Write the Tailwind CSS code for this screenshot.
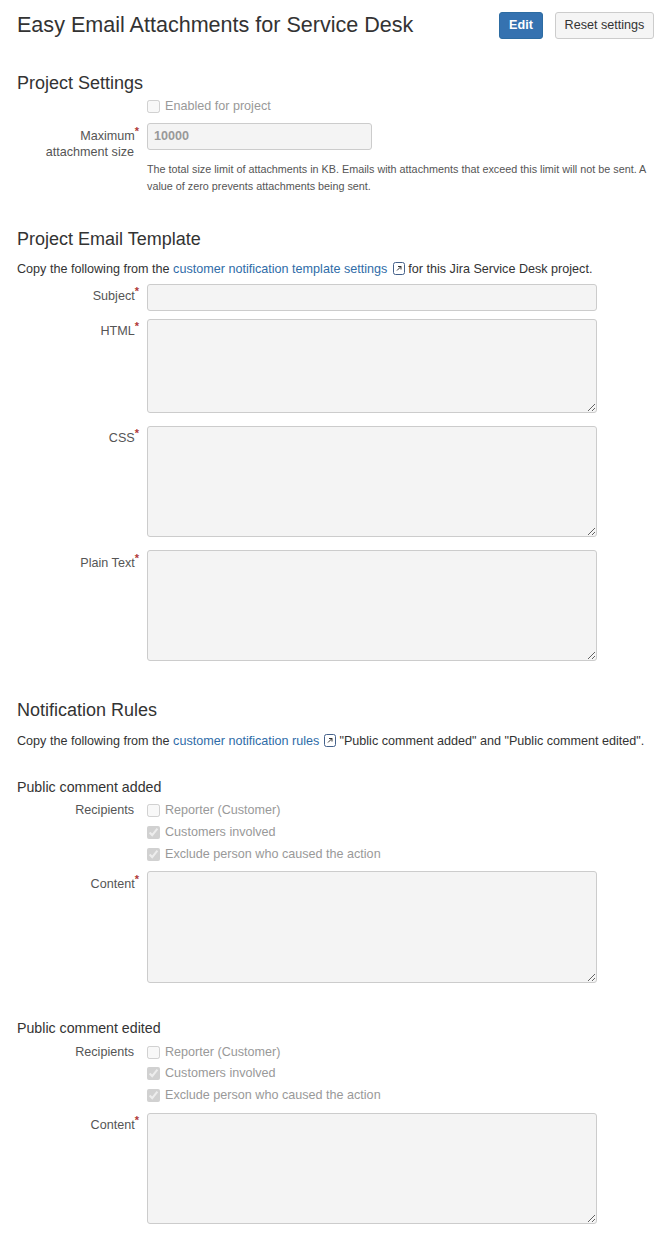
<!DOCTYPE html>
<html lang="en">

<head>
    <meta charset="UTF-8">
    <meta name="viewport" content="width=device-width, initial-scale=1.0">
    <script src="https://cdn.jsdelivr.net/npm/@tailwindcss/browser@4"></script>
    <title>Easy Email Attachments for Service Desk</title>
</head>

<body class="bg-white font-['Liberation_Sans',Arial,sans-serif] text-[12.6px] text-[#333]">
    <div class="pl-[17px] pr-[9px] pt-[12px] h-[1236px] overflow-hidden">
        <!--Header-->
        <div class="flex items-start h-[27px]">
            <h1 class="flex-1 text-[21.55px] leading-[26px] text-[#333]">Easy Email Attachments for Service Desk</h1>
            <button class="h-[27px] w-[44px] mr-[12px] rounded-[3px] bg-[#3572b0] border border-[#2d6ca2] text-white font-bold text-[12.6px]">Edit</button>
            <button class="h-[27px] w-[99px] rounded-[3px] bg-[#f5f5f5] border border-[#ccc] text-[#333] text-[12.6px]">Reset settings</button>
        </div>

        <!--Project Settings-->
        <h2 class="mt-[33px] text-[18px] leading-[22px]">Project Settings</h2>
        <div class="ml-[130px] mt-[2px] h-[20px] flex items-center">
            <input type="checkbox" disabled class="w-[13px] h-[13px] m-0 mr-[5px]">
            <span class="text-[#999]">Enabled for project</span>
        </div>
        <div class="flex mt-[7px]">
            <label class="w-[130px] pr-[13px] pt-[5px] text-right leading-[16px] text-[#555]">Maximum<span class="text-[#b03a38] font-bold text-[11px] align-super leading-[0] -mr-[5px]">*</span><br>attachment size</label>
            <input type="text" disabled value="10000" class="w-[225px] h-[27px] px-[6px] pb-[2px] rounded-[3px] border border-[#ccc] bg-[#f4f4f4] text-[#999] font-bold text-[12.6px]">
        </div>
        <p class="ml-[130px] mt-[1px] text-[10.8px] leading-[17px] text-[#555]">The total size limit of attachments in KB. Emails with attachments that exceed this limit will not be sent. A value of zero prevents attachments being sent.</p>

        <!--Project Email Template-->
        <h2 class="mt-[33px] text-[18px] leading-[22px]">Project Email Template</h2>
        <p class="mt-[9px] leading-[20px]">Copy the following from the <a class="text-[#2f6ca8]">customer notification template settings</a>
            <svg class="inline-block align-[-2px] ml-[2px]" width="12" height="13" viewBox="0 0 12 13" fill="none" stroke="#44618a"><rect x=".5" y=".5" width="11" height="12" rx="2"/><path d="M4 8.5 8 4.5M5 4.5h3v3" stroke="#333"/></svg>
            for this Jira Service Desk project.</p>
        <div class="flex mt-[5px]">
            <label class="w-[130px] pr-[13px] pt-[3px] text-right text-[#555]">Subject<span class="text-[#b03a38] font-bold text-[11px] align-super leading-[0] -mr-[5px]">*</span></label>
            <input type="text" disabled class="w-[450px] h-[27px] rounded-[3px] border border-[#ccc] bg-[#f4f4f4]">
        </div>
        <div class="flex mt-[8px]">
            <label class="w-[130px] pr-[13px] pt-[3px] text-right text-[#555]">HTML<span class="text-[#b03a38] font-bold text-[11px] align-super leading-[0] -mr-[5px]">*</span></label>
            <textarea disabled class="block w-[450px] h-[94px] rounded-[3px] border border-[#ccc] bg-[#f4f4f4]"></textarea>
        </div>
        <div class="flex mt-[13px]">
            <label class="w-[130px] pr-[13px] pt-[3px] text-right text-[#555]">CSS<span class="text-[#b03a38] font-bold text-[11px] align-super leading-[0] -mr-[5px]">*</span></label>
            <textarea disabled class="block w-[450px] h-[111px] rounded-[3px] border border-[#ccc] bg-[#f4f4f4]"></textarea>
        </div>
        <div class="flex mt-[13px]">
            <label class="w-[130px] pr-[13px] pt-[4px] text-right text-[#555]">Plain Text<span class="text-[#b03a38] font-bold text-[11px] align-super leading-[0] -mr-[5px]">*</span></label>
            <textarea disabled class="block w-[450px] h-[111px] rounded-[3px] border border-[#ccc] bg-[#f4f4f4]"></textarea>
        </div>

        <!--Notification Rules-->
        <h2 class="mt-[38px] text-[18px] leading-[22px]">Notification Rules</h2>
        <p class="mt-[10px] leading-[20px]">Copy the following from the <a class="text-[#2f6ca8]">customer notification rules</a>
            <svg class="inline-block align-[-2px] ml-[1px]" width="12" height="13" viewBox="0 0 12 13" fill="none" stroke="#44618a"><rect x=".5" y=".5" width="11" height="12" rx="2"/><path d="M4 8.5 8 4.5M5 4.5h3v3" stroke="#333"/></svg>
            "Public comment added" and "Public comment edited".</p>

        <h3 class="mt-[26px] text-[14.2px] leading-[20px]">Public comment added</h3>
        <div class="flex mt-[3px]">
            <label class="w-[130px] pr-[13px] text-right leading-[20px] text-[#555]">Recipients</label>
            <div class="flex flex-col gap-[2px]">
                <div class="h-[20px] flex items-center"><input type="checkbox" disabled class="w-[13px] h-[13px] m-0 mr-[5px]"><span class="text-[#999]">Reporter (Customer)</span></div>
                <div class="h-[20px] flex items-center"><input type="checkbox" disabled checked class="w-[13px] h-[13px] m-0 mr-[5px]"><span class="text-[#999]">Customers involved</span></div>
                <div class="h-[20px] flex items-center"><input type="checkbox" disabled checked class="w-[13px] h-[13px] m-0 mr-[5px]"><span class="text-[#999]">Exclude person who caused the action</span></div>
            </div>
        </div>
        <div class="flex mt-[7px]">
            <label class="w-[130px] pr-[13px] pt-[4px] text-right text-[#555]">Content<span class="text-[#b03a38] font-bold text-[11px] align-super leading-[0] -mr-[5px]">*</span></label>
            <textarea disabled class="block w-[450px] h-[112px] rounded-[3px] border border-[#ccc] bg-[#f4f4f4]"></textarea>
        </div>

        <h3 class="mt-[35px] text-[14.2px] leading-[20px]">Public comment edited</h3>
        <div class="flex mt-[4px]">
            <label class="w-[130px] pr-[13px] text-right leading-[20px] text-[#555]">Recipients</label>
            <div class="flex flex-col gap-[1.5px]">
                <div class="h-[20px] flex items-center"><input type="checkbox" disabled class="w-[13px] h-[13px] m-0 mr-[5px]"><span class="text-[#999]">Reporter (Customer)</span></div>
                <div class="h-[20px] flex items-center"><input type="checkbox" disabled checked class="w-[13px] h-[13px] m-0 mr-[5px]"><span class="text-[#999]">Customers involved</span></div>
                <div class="h-[20px] flex items-center"><input type="checkbox" disabled checked class="w-[13px] h-[13px] m-0 mr-[5px]"><span class="text-[#999]">Exclude person who caused the action</span></div>
            </div>
        </div>
        <div class="flex mt-[8px]">
            <label class="w-[130px] pr-[13px] pt-[3px] text-right text-[#555]">Content<span class="text-[#b03a38] font-bold text-[11px] align-super leading-[0] -mr-[5px]">*</span></label>
            <textarea disabled class="block w-[450px] h-[111px] rounded-[3px] border border-[#ccc] bg-[#f4f4f4]"></textarea>
        </div>
    </div>
</body>

</html>
